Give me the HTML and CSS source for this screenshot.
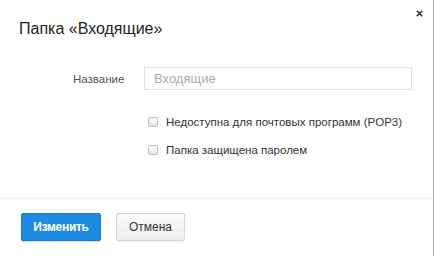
FILE: index.html
```html
<!DOCTYPE html>
<html lang="ru">
<head>
<meta charset="utf-8">
<link rel="stylesheet" href="styles.css">
</head>
<body>
<div class="dialog">
  <button class="close" aria-label="Закрыть">
    <svg width="7" height="7" viewBox="0 0 7 7"><path d="M0.8 0.8 L6.2 6.2 M6.2 0.8 L0.8 6.2" stroke="#333" stroke-width="1.6" fill="none"/></svg>
  </button>
  <div class="main">
    <h1 class="title">Папка «Входящие»</h1>
    <div class="field">
      <label class="field-label" for="name">Название</label>
      <input id="name" class="field-input" type="text" placeholder="Входящие">
    </div>
    <div class="checks">
      <label class="check"><input type="checkbox" class="box"><span>Недоступна для почтовых программ (POP3)</span></label>
      <label class="check"><input type="checkbox" class="box"><span>Папка защищена паролем</span></label>
    </div>
  </div>
  <div class="footer">
    <button class="btn btn-primary">Изменить</button>
    <button class="btn btn-default">Отмена</button>
  </div>
</div>
</body>
</html>
```
FILE: styles.css
```css
* { box-sizing: border-box; }
html, body { margin: 0; padding: 0; background: #fff; }
body { font-family: "Liberation Sans", Arial, sans-serif; color: #333; }

.dialog {
  position: relative;
  width: 434px;
  height: 256px;
  border-right: 1px solid #a6a6a6;
  display: flex;
  flex-direction: column;
  background: #fff;
}

.close {
  position: absolute;
  top: 10px;
  right: 10px;
  width: 7px;
  height: 7px;
  padding: 0;
  border: 0;
  background: none;
  display: flex;
}

.main { flex: 1; }

.title {
  margin: 0;
  padding: 19px 19px 0;
  font-size: 16px;
  line-height: 20px;
  font-weight: normal;
  color: #222;
}

.field {
  margin-top: 28px;
  padding-left: 73px;
  display: grid;
  grid-template-columns: 71px 268px;
  align-items: center;
}

.field-label {
  font-size: 11.5px;
  color: #555;
}

.field-input {
  height: 23px;
  margin: 0;
  border: 1px solid #e0e0e0;
  padding: 0 9px;
  font-family: "Liberation Sans", Arial, sans-serif;
  font-size: 13px;
  color: #333;
  outline: none;
}
.field-input::placeholder { color: #aaa; }

.checks {
  margin-top: 24px;
  padding-left: 148px;
  display: flex;
  flex-direction: column;
  gap: 12px;
}

.check {
  display: flex;
  align-items: center;
  height: 16px;
  font-size: 11.5px;
  color: #333;
}

.box {
  appearance: none;
  -webkit-appearance: none;
  margin: 0 8px 0 0;
  width: 10px;
  height: 10px;
  border: 1px solid #bdbdbd;
  border-radius: 2px;
  background: linear-gradient(#fdfdfd, #e4e4e4);
}

.footer {
  height: 58px;
  border-top: 1px solid #ececec;
  padding: 14px 21px 0;
  display: flex;
  gap: 15px;
  align-items: flex-start;
}

.btn {
  height: 28px;
  margin: 0;
  border-radius: 2px;
  font-family: "Liberation Sans", Arial, sans-serif;
  font-size: 12px;
  padding: 0;
}

.btn-primary {
  width: 80px;
  background: #1f8ae2;
  border: 1px solid #1a7ccf;
  color: #fff;
  font-weight: bold;
  letter-spacing: -0.3px;
  box-shadow: 0 1px 1px rgba(0,0,0,0.15);
}

.btn-default {
  width: 69px;
  background: linear-gradient(#fbfbfb, #eeeeee);
  border: 1px solid #d4d4d4;
  color: #333;
  box-shadow: 0 1px 1px rgba(0,0,0,0.06);
}
```
